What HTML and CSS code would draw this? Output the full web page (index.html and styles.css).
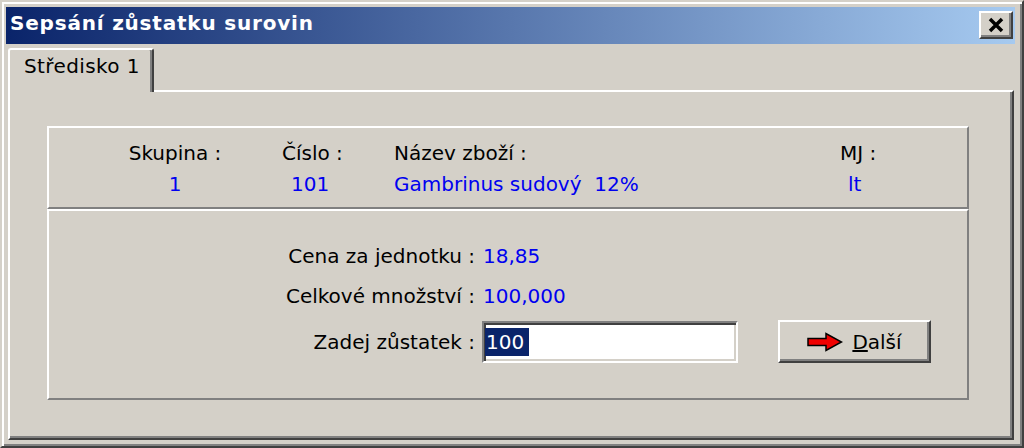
FILE: index.html
```html
<!DOCTYPE html>
<html lang="cs">
<head>
    <meta charset="UTF-8">
    <title>Sepsání zůstatku surovin</title>
    <link rel="stylesheet" href="styles.css">
</head>
<body>

    <div class="window">
        <div class="titlebar">
            <span class="title">Sepsání zůstatku surovin</span>
            <button class="close">
                <svg width="18" height="16" viewBox="0 0 18 16">
                    <path d="M3 2 L15 14 M15 2 L3 14" stroke="#000" stroke-width="3.5" fill="none"/>
                </svg>
            </button>
        </div>

        <div class="tabs">
            <div class="tab">Středisko 1</div>
        </div>

        <div class="panel">
            <div class="group">
                <div class="group-head">
                    <div class="cell center">Skupina :</div>
                    <div class="cell col2-label">Číslo :</div>
                    <div class="cell">Název zboží :</div>
                    <div class="cell">MJ :</div>

                    <div class="cell center value">1</div>
                    <div class="cell col2-value value">101</div>
                    <div class="cell value">Gambrinus sudový&nbsp; 12%</div>
                    <div class="cell col4-value value">lt</div>
                </div>

                <div class="group-body">
                    <div class="row">
                        <div class="label">Cena za jednotku :</div>
                        <div class="value amount">18,85</div>
                    </div>
                    <div class="row">
                        <div class="label">Celkové množství :</div>
                        <div class="value amount">100,000</div>
                    </div>
                    <div class="row row-entry">
                        <div class="label">Zadej zůstatek :</div>
                        <div class="entry"><span class="sel">100</span></div>
                        <button class="btn">
                            <svg width="36" height="20" viewBox="0 0 36 20">
                                <path d="M1 6.5 H19 V1.5 L34.5 10 L19 18.5 V13.5 H1 Z" fill="#f00000" stroke="#000" stroke-width="1.5"/>
                            </svg>
                            <span><u>D</u>alší</span>
                        </button>
                    </div>
                </div>
            </div>
        </div>
    </div>

</body>
</html>
```

FILE: styles.css
```css
* {
    box-sizing: border-box;
}

body {
    margin: 0;
    font-family: "DejaVu Sans", sans-serif;
    font-size: 20px;
    color: #000000;
    background-color: #d4d0c8;
}

.window {
    width: 1024px;
    height: 448px;
    display: flex;
    flex-direction: column;
    background-color: #d4d0c8;
    border: 2px solid;
    border-color: #d4d0c8 #404040 #404040 #d4d0c8;
    box-shadow: inset 2px 2px 0 #ffffff, inset -2px -2px 0 #808080;
    padding: 5px 7px 6px 4px;
}

.titlebar {
    height: 37px;
    flex-shrink: 0;
    display: flex;
    align-items: flex-start;
    justify-content: space-between;
    background: linear-gradient(to right, #0a246a, #a6caf0);
    padding: 4px 2px 0 4px;
}

.title {
    color: #ffffff;
    font-weight: bold;
    letter-spacing: 0.8px;
    line-height: 32px;
    margin-top: -4px;
}

.close {
    width: 34px;
    height: 28px;
    padding: 0;
    background-color: #d4d0c8;
    border: 2px solid;
    border-color: #ffffff #404040 #404040 #ffffff;
    box-shadow: inset -2px -2px 0 #808080;
    display: flex;
    align-items: center;
    justify-content: center;
}

.tabs {
    display: flex;
    margin-top: 4px;
    padding-left: 2px;
    flex-shrink: 0;
}

.tab {
    position: relative;
    z-index: 1;
    margin-bottom: -2px;
    background-color: #d4d0c8;
    border: 2px solid;
    border-color: #ffffff #404040 transparent #ffffff;
    border-bottom: none;
    border-radius: 3px 3px 0 0;
    box-shadow: inset -2px 0 0 #808080;
    padding: 4px 12px 14px 14px;
    line-height: 24px;
    letter-spacing: 0.4px;
}

.panel {
    flex: 1;
    margin: 0 1px 0 2px;
    border: 2px solid;
    border-color: #ffffff #404040 #404040 #ffffff;
    box-shadow: inset -2px -2px 0 #808080;
    padding: 34px 43px 38px 37px;
    display: flex;
    flex-direction: column;
}

.group {
    flex: 1;
    display: flex;
    flex-direction: column;
}

.group-head {
    height: 83px;
    border: 2px solid;
    border-color: #ffffff #808080 #808080 #ffffff;
    padding: 11px 0 0 63px;
    display: grid;
    grid-template-columns: 126px 156px 446px 1fr;
    grid-auto-rows: 28px;
    row-gap: 3px;
    line-height: 28px;
}

.cell {
    white-space: nowrap;
}

.center {
    text-align: center;
}

.col2-label {
    padding-left: 44px;
}

.col2-value {
    padding-left: 53px;
}

.col4-value {
    padding-left: 8px;
}

.value {
    color: #0000f0;
}

.group-body {
    flex: 1;
    border: 2px solid;
    border-color: #ffffff #808080 #808080 #ffffff;
    padding-top: 25px;
}

.row {
    display: flex;
    align-items: center;
    height: 40px;
}

.row-entry {
    height: 43px;
    margin-top: 4px;
}

.label {
    width: 426px;
    text-align: right;
    white-space: nowrap;
}

.amount {
    margin-left: 8px;
}

.entry {
    width: 256px;
    height: 42px;
    margin-left: 7px;
    background-color: #ffffff;
    border: 2px solid;
    border-color: #808080 #ffffff #ffffff #808080;
    box-shadow: inset 2px 2px 0 #404040, inset -2px -2px 0 #d4d0c8;
    padding: 5px 0 0 1px;
}

.sel {
    display: inline-block;
    background-color: #0a246a;
    color: #ffffff;
    line-height: 28px;
    padding: 0 5px 0 1px;
}

.btn {
    width: 153px;
    height: 43px;
    margin-left: 40px;
    background-color: #d4d0c8;
    border: 2px solid;
    border-color: #ffffff #404040 #404040 #ffffff;
    box-shadow: inset -2px -2px 0 #808080;
    display: flex;
    align-items: center;
    justify-content: center;
    gap: 9px;
    padding: 0;
    font-family: inherit;
    font-size: 20px;
    color: #000000;
}
```
